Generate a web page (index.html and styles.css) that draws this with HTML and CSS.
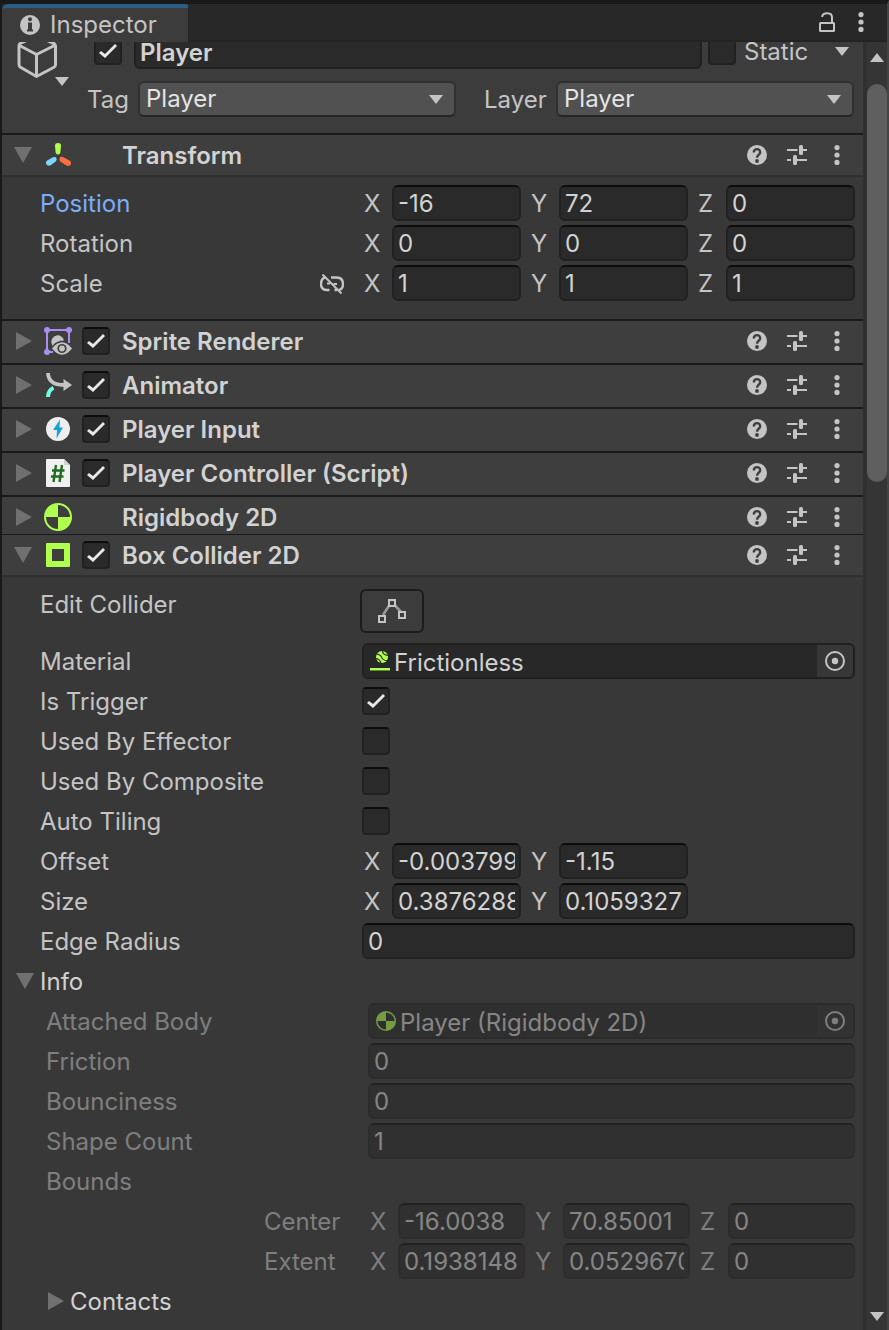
FILE: index.html
```html
<!DOCTYPE html>
<html lang="en">
<head>
<meta charset="utf-8">
<meta name="viewport" content="width=device-width, initial-scale=1">
<title>Inspector</title>
<link rel="stylesheet" href="styles.css">
</head>
<body>
<svg class="sprites" aria-hidden="true">
  <symbol id="i-help" viewBox="0 0 20 20"><circle cx="10" cy="10" r="10" fill="#c4c4c4"/><path d="M6.800 7.400C6.800 3 13.200 3.100 13.200 7.200C13.200 9.600 10 9.600 10 12.800" fill="none" stroke="#3e3e3e" stroke-width="2.400"/><circle cx="10" cy="16" r="1.900" fill="#3e3e3e"/></symbol>
  <symbol id="i-preset" viewBox="0 0 20 20"><path d="M0 5H10.500M16 5H20M0 15H4M10 15H20" stroke="#c4c4c4" stroke-width="2"/><rect x="12" y="0" width="4" height="10" rx="1.500" fill="#c4c4c4"/><rect x="6" y="10" width="4" height="10" rx="1.500" fill="#c4c4c4"/></symbol>
  <symbol id="i-dots" viewBox="0 0 20 20"><g fill="#c4c4c4"><circle cx="10" cy="2.600" r="2.600"/><circle cx="10" cy="10" r="2.600"/><circle cx="10" cy="17.400" r="2.600"/></g></symbol>
  <symbol id="i-open" viewBox="0 0 18 18"><path d="M0 1H18L9 17Z" fill="#707070"/></symbol>
  <symbol id="i-closed" viewBox="0 0 18 18"><path d="M2 0V18L18 9Z" fill="#707070"/></symbol>
  <symbol id="i-down" viewBox="0 0 14 9"><path d="M0 0H14L7 9Z" fill="#c4c4c4"/></symbol>
  <symbol id="i-pick" viewBox="0 0 20 20"><circle cx="10" cy="10" r="9" fill="none" stroke="#c4c4c4" stroke-width="2"/><circle cx="10" cy="10" r="3.200" fill="#c4c4c4"/></symbol>
  <symbol id="i-body" viewBox="0 0 28 28"><circle cx="14" cy="14" r="13" fill="none" stroke="#b0ff4f" stroke-width="2"/><path d="M14 14V1A13 13 0 0 0 1 14ZM14 14V27A13 13 0 0 0 27 14Z" fill="#b0ff4f"/></symbol>
</svg>

<div class="window">
  <header class="tabbar">
    <div class="tab">
      <svg class="icon20" viewBox="0 0 20 20" aria-hidden="true"><circle cx="10" cy="10" r="10" fill="#c4c4c4"/><circle cx="10" cy="4.200" r="2" fill="#3c3c3c"/><path d="M8 7.500H12V14.500H13V16.500H7V14.500H8Z" fill="#3c3c3c"/></svg>
      <span>Inspector</span>
    </div>
    <div class="tabbar-tools">
      <button class="tool" aria-label="Lock"><svg class="icon20" viewBox="0 0 20 20"><rect x="3" y="11" width="14" height="8" rx="0.500" fill="none" stroke="#c4c4c4" stroke-width="2"/><path d="M5 5C6 0 15 0 15 5.500V11" fill="none" stroke="#c4c4c4" stroke-width="2"/></svg></button>
      <button class="tool" aria-label="Window menu"><svg class="icon20"><use href="#i-dots"/></svg></button>
    </div>
  </header>

  <div class="view">
    <main class="content">
      <section class="object">
        <div class="object-icon">
          <svg class="cube" viewBox="0 0 54 54" aria-hidden="true"><path d="M20.500 1L38 8.500Q39.500 9.500 39.500 11V29.500Q39.500 31.500 38 32.300L20.500 41.500L4.500 32.300Q3 31.500 3 29.500V11Q3 9.500 4 8.500Z M3.500 10.500L20.500 19.500L38.500 10.500M20.500 19.500V41" fill="none" stroke="#c4c4c4" stroke-width="3" stroke-linejoin="round"/><path d="M39 42H53L46 51Z" fill="#c4c4c4"/></svg>
        </div>
        <div class="object-main">
          <div class="name-row">
            <input type="checkbox" class="check" aria-label="Active" checked>
            <input type="text" class="field name" aria-label="Name" value="Player">
            <div class="static">
              <input type="checkbox" class="check" id="static"><label for="static">Static</label>
              <button class="tool static-menu" aria-label="Static options"><svg class="caret"><use href="#i-down"/></svg></button>
            </div>
          </div>
          <div class="tag-row">
            <label for="tag">Tag</label>
            <div class="drop"><select id="tag"><option>Player</option></select><svg class="caret" aria-hidden="true"><use href="#i-down"/></svg></div>
            <label class="layer" for="layer">Layer</label>
            <div class="drop"><select id="layer"><option>Player</option></select><svg class="caret" aria-hidden="true"><use href="#i-down"/></svg></div>
          </div>
        </div>
      </section>

      <section class="component">
        <div class="head open">
          <button class="tool fold" aria-label="Collapse Transform"><svg><use href="#i-open"/></svg></button>
          <svg class="icon28" viewBox="0 0 28 28" aria-hidden="true"><path d="M14 2Q17.200 2 17 5L16.300 12Q14 15 11.700 12L11 5Q10.800 2 14 2Z" fill="#b0ff4f"/><path d="M12.500 17Q13.200 19.500 11.500 20.800L6.500 24.200Q3.500 25.500 2.200 23Q1.200 20.300 4 19L9 16.300Q11.500 15.300 12.500 17Z" fill="#7fd6fd"/><path d="M15.500 17Q16.500 15 19 16L25 19.200Q27.800 21 26.800 23.500Q25.300 25.800 22 24.300L16.500 20.800Q15 19 15.500 17Z" fill="#ff6e40"/></svg>
          <span class="slot"></span>
          <h2>Transform</h2>
          <div class="tools"><button class="tool" aria-label="Help"><svg class="icon20"><use href="#i-help"/></svg></button><button class="tool" aria-label="Presets"><svg class="icon20"><use href="#i-preset"/></svg></button><button class="tool" aria-label="More"><svg class="icon20"><use href="#i-dots"/></svg></button></div>
        </div>
        <div class="body transform-body">
          <div class="row" role="group" aria-label="Position">
            <span class="changed">Position</span>
            <div class="vector"><label><span>X</span><input class="field" value="-16"></label><label><span>Y</span><input class="field" value="72"></label><label><span>Z</span><input class="field" value="0"></label></div>
          </div>
          <div class="row" role="group" aria-label="Rotation">
            <span>Rotation</span>
            <div class="vector"><label><span>X</span><input class="field" value="0"></label><label><span>Y</span><input class="field" value="0"></label><label><span>Z</span><input class="field" value="0"></label></div>
          </div>
          <div class="row" role="group" aria-label="Scale">
            <span class="with-link">Scale<button class="tool" aria-label="Constrain proportions"><svg class="link" viewBox="0 0 24 20"><path d="M6 3.200Q1 4 1 10Q1 16 7 16H9.500M11 3.500H16Q23 3.500 23 10Q23 15 19 16M14.500 16H17" fill="none" stroke="#c4c4c4" stroke-width="2.400"/><path d="M7 9.500H10M13.500 10H17" stroke="#c4c4c4" stroke-width="2"/><path d="M2.500 0.500L21.500 19.500" stroke="#c4c4c4" stroke-width="2"/></svg></button></span>
            <div class="vector"><label><span>X</span><input class="field" value="1"></label><label><span>Y</span><input class="field" value="1"></label><label><span>Z</span><input class="field" value="1"></label></div>
          </div>
        </div>
      </section>

      <section class="component">
        <div class="head">
          <button class="tool fold" aria-label="Expand Sprite Renderer"><svg><use href="#i-closed"/></svg></button>
          <svg class="icon28" viewBox="0 0 28 28" aria-hidden="true"><g stroke="#a98ef0" stroke-width="2" fill="none"><path d="M3 25V3H25V16M3 25H9"/></g><g fill="#a98ef0"><circle cx="3" cy="3" r="3"/><circle cx="25" cy="3" r="3"/><circle cx="3" cy="25" r="3"/></g><path d="M7.500 16A6.300 6.300 0 1 1 20 13.500Q12 13.500 8.500 19Z" fill="#c4c4c4"/><path d="M8 21.500Q18 9 28 21.500Q18 34 8 21.500Z" fill="#c4c4c4"/><circle cx="18" cy="21.500" r="4.600" fill="#3e3e3e"/><circle cx="18" cy="21.500" r="2.900" fill="#c4c4c4"/></svg>
          <input type="checkbox" class="check" aria-label="Enable Sprite Renderer" checked>
          <h2>Sprite Renderer</h2>
          <div class="tools"><button class="tool" aria-label="Help"><svg class="icon20"><use href="#i-help"/></svg></button><button class="tool" aria-label="Presets"><svg class="icon20"><use href="#i-preset"/></svg></button><button class="tool" aria-label="More"><svg class="icon20"><use href="#i-dots"/></svg></button></div>
        </div>
      </section>

      <section class="component">
        <div class="head">
          <button class="tool fold" aria-label="Expand Animator"><svg><use href="#i-closed"/></svg></button>
          <svg class="icon28" viewBox="0 0 28 28" aria-hidden="true"><path d="M4 2Q4.500 14 20 14" fill="none" stroke="#c4c4c4" stroke-width="3.800"/><path d="M19.500 8L28 14L19.500 20Z" fill="#c4c4c4"/><path d="M4 26Q4 19.500 9.500 16.800" fill="none" stroke="#6fffe0" stroke-width="4"/></svg>
          <input type="checkbox" class="check" aria-label="Enable Animator" checked>
          <h2>Animator</h2>
          <div class="tools"><button class="tool" aria-label="Help"><svg class="icon20"><use href="#i-help"/></svg></button><button class="tool" aria-label="Presets"><svg class="icon20"><use href="#i-preset"/></svg></button><button class="tool" aria-label="More"><svg class="icon20"><use href="#i-dots"/></svg></button></div>
        </div>
      </section>

      <section class="component">
        <div class="head">
          <button class="tool fold" aria-label="Expand Player Input"><svg><use href="#i-closed"/></svg></button>
          <svg class="icon28" viewBox="0 0 28 28" aria-hidden="true"><circle cx="14" cy="14" r="12" fill="#eeeeee"/><path d="M16 4.500L9 15H13L12.500 23.500L19 12.500H15.500Z" fill="#17a2d4"/></svg>
          <input type="checkbox" class="check" aria-label="Enable Player Input" checked>
          <h2>Player Input</h2>
          <div class="tools"><button class="tool" aria-label="Help"><svg class="icon20"><use href="#i-help"/></svg></button><button class="tool" aria-label="Presets"><svg class="icon20"><use href="#i-preset"/></svg></button><button class="tool" aria-label="More"><svg class="icon20"><use href="#i-dots"/></svg></button></div>
        </div>
      </section>

      <section class="component">
        <div class="head">
          <button class="tool fold" aria-label="Expand Player Controller"><svg><use href="#i-closed"/></svg></button>
          <svg class="icon28" viewBox="0 0 28 28" aria-hidden="true"><path d="M3 0H20L26 6V27Q26 28 25 28H3Q2 28 2 27V1Q2 0 3 0Z" fill="#f0f0f0"/><path d="M20 0V6H26Z" fill="#d0d0d0"/><path d="M12 6L9.500 23M18 6L15.500 23M8 11.500H20.500M7 17.500H19.500" stroke="#226b22" stroke-width="2.400"/></svg>
          <input type="checkbox" class="check" aria-label="Enable Player Controller" checked>
          <h2>Player Controller (Script)</h2>
          <div class="tools"><button class="tool" aria-label="Help"><svg class="icon20"><use href="#i-help"/></svg></button><button class="tool" aria-label="Presets"><svg class="icon20"><use href="#i-preset"/></svg></button><button class="tool" aria-label="More"><svg class="icon20"><use href="#i-dots"/></svg></button></div>
        </div>
      </section>

      <section class="component">
        <div class="head tight">
          <button class="tool fold" aria-label="Expand Rigidbody 2D"><svg><use href="#i-closed"/></svg></button>
          <svg class="icon28" aria-hidden="true"><use href="#i-body"/></svg>
          <span class="slot"></span>
          <h2>Rigidbody 2D</h2>
          <div class="tools"><button class="tool" aria-label="Help"><svg class="icon20"><use href="#i-help"/></svg></button><button class="tool" aria-label="Presets"><svg class="icon20"><use href="#i-preset"/></svg></button><button class="tool" aria-label="More"><svg class="icon20"><use href="#i-dots"/></svg></button></div>
        </div>
      </section>

      <section class="component thin">
        <div class="head open">
          <button class="tool fold" aria-label="Collapse Box Collider 2D"><svg><use href="#i-open"/></svg></button>
          <svg class="icon28" viewBox="0 0 28 28" aria-hidden="true"><path fill-rule="evenodd" d="M3 2H25Q26 2 26 3V25Q26 26 25 26H3Q2 26 2 25V3Q2 2 3 2ZM8 8V20H20V8Z" fill="#b0ff4f"/></svg>
          <input type="checkbox" class="check" aria-label="Enable Box Collider 2D" checked>
          <h2>Box Collider 2D</h2>
          <div class="tools"><button class="tool" aria-label="Help"><svg class="icon20"><use href="#i-help"/></svg></button><button class="tool" aria-label="Presets"><svg class="icon20"><use href="#i-preset"/></svg></button><button class="tool" aria-label="More"><svg class="icon20"><use href="#i-dots"/></svg></button></div>
        </div>
        <div class="body collider-body">
          <div class="row edit-row">
            <span>Edit Collider</span>
            <button class="edit" aria-label="Edit Collider"><svg viewBox="0 0 28 24" aria-hidden="true"><path d="M5 16L11.500 6M16.500 6L23 13" stroke="#9a9a9a" stroke-width="2.600"/><g fill="#3c3c3c" stroke="#c4c4c4" stroke-width="2"><rect x="1" y="17" width="6" height="6"/><rect x="11" y="1" width="6" height="6"/><rect x="21" y="13" width="6" height="6"/></g></svg></button>
          </div>
          <div class="row">
            <span>Material</span>
            <div class="objfield">
              <svg class="icon20" viewBox="0 0 20 20" aria-hidden="true"><path d="M0 18H20" stroke="#b0ff4f" stroke-width="2"/><path d="M0 19.500H20" stroke="#5c8a28" stroke-width="1"/><circle cx="12" cy="6" r="6" fill="#b0ff4f"/><path d="M5.500 2.500Q11 4 11.500 6Q12 9 17.500 10M12.500 0Q12.500 4 18.500 4.500M5.500 7.500Q10.500 8 11 12.500" fill="none" stroke="#282828" stroke-width="1.200"/></svg>
              <span class="objname">Frictionless</span>
              <button class="pick" aria-label="Select Material"><svg class="icon20"><use href="#i-pick"/></svg></button>
            </div>
          </div>
          <div class="row"><label for="trigger">Is Trigger</label><input type="checkbox" class="check" id="trigger" checked></div>
          <div class="row"><label for="effector">Used By Effector</label><input type="checkbox" class="check" id="effector"></div>
          <div class="row"><label for="composite">Used By Composite</label><input type="checkbox" class="check" id="composite"></div>
          <div class="row"><label for="tiling">Auto Tiling</label><input type="checkbox" class="check" id="tiling"></div>
          <div class="row" role="group" aria-label="Offset">
            <span>Offset</span>
            <div class="vector"><label><span>X</span><input class="field" value="-0.0037994"></label><label><span>Y</span><input class="field" value="-1.15"></label></div>
          </div>
          <div class="row" role="group" aria-label="Size">
            <span>Size</span>
            <div class="vector"><label><span>X</span><input class="field" value="0.3876288"></label><label><span>Y</span><input class="field" value="0.1059327"></label></div>
          </div>
          <div class="row"><label for="radius">Edge Radius</label><input class="field" id="radius" value="0"></div>
          <button class="tool foldrow"><svg class="foldmark" aria-hidden="true"><use href="#i-open"/></svg><span>Info</span></button>
          <div class="info">
            <div class="row">
              <span>Attached Body</span>
              <div class="objfield">
                <svg class="icon20" aria-hidden="true"><use href="#i-body"/></svg>
                <span class="objname">Player (Rigidbody 2D)</span>
                <button class="pick" aria-label="Select Attached Body" disabled><svg class="icon20"><use href="#i-pick"/></svg></button>
              </div>
            </div>
            <div class="row"><label for="friction">Friction</label><input class="field" id="friction" value="0" disabled></div>
            <div class="row"><label for="bounce">Bounciness</label><input class="field" id="bounce" value="0" disabled></div>
            <div class="row"><label for="shapes">Shape Count</label><input class="field" id="shapes" value="1" disabled></div>
            <div class="row"><span>Bounds</span></div>
            <div class="row" role="group" aria-label="Center">
              <span class="sub">Center</span>
              <div class="vector"><label><span>X</span><input class="field" value="-16.0038" disabled></label><label><span>Y</span><input class="field" value="70.85001" disabled></label><label><span>Z</span><input class="field" value="0" disabled></label></div>
            </div>
            <div class="row" role="group" aria-label="Extent">
              <span class="sub">Extent</span>
              <div class="vector"><label><span>X</span><input class="field" value="0.1938148" disabled></label><label><span>Y</span><input class="field" value="0.0529670" disabled></label><label><span>Z</span><input class="field" value="0" disabled></label></div>
            </div>
          </div>
          <button class="tool foldrow nested"><svg class="foldmark" aria-hidden="true"><use href="#i-closed"/></svg><span>Contacts</span></button>
        </div>
      </section>
    </main>

    <div class="scrollbar">
      <button class="tool" aria-label="Scroll up"><svg class="caret up"><use href="#i-down"/></svg></button>
      <div class="track"><div class="thumb"></div></div>
      <button class="tool" aria-label="Scroll down"><svg class="caret"><use href="#i-down"/></svg></button>
    </div>
  </div>
</div>
</body>
</html>
```

FILE: styles.css
```css
* {
  box-sizing: border-box;
}

body {
  margin: 0;
  background: #383838;
  color: #c4c4c4;
  font: 24px/28px Inter, "Liberation Sans", sans-serif;
}

button,
input,
select {
  margin: 0;
  font: inherit;
  color: inherit;
}

svg {
  display: block;
  flex: none;
}

.sprites {
  display: none;
}

.window {
  display: flex;
  flex-direction: column;
  height: 100vh;
  overflow: hidden;
  border: solid #191919;
  border-width: 4px 0 0 2px;
  border-right: 2px solid #444444;
}

/* Tab bar */

.tabbar {
  display: flex;
  justify-content: space-between;
  flex: none;
  height: 38px;
  background: #282828;
  box-shadow: inset 0 -2px #232323;
}

.tab {
  display: flex;
  align-items: center;
  gap: 10px;
  width: 187px;
  padding-left: 18px;
  border-top: 4px solid #2c5d87;
  border-right: 1px solid #232323;
  border-radius: 6px 4px 0 0;
  background: #3c3c3c;
}

.tabbar-tools {
  display: flex;
  align-items: flex-start;
  gap: 14px;
  padding: 8px 16px 0 0;
}

.tool {
  display: block;
  flex: none;
  padding: 0;
  border: 0;
  background: none;
}

.icon20 {
  width: 20px;
  height: 20px;
}

.icon28 {
  width: 28px;
  height: 28px;
}

.caret {
  width: 14px;
  height: 9px;
}

.up {
  transform: rotate(180deg);
}

/* Scroll view */

.view {
  display: flex;
  flex: 1;
  min-height: 0;
}

.content {
  flex: 1;
  min-width: 0;
  overflow: hidden;
}

.scrollbar {
  display: flex;
  flex-direction: column;
  align-items: center;
  flex: none;
  width: 24px;
  padding: 11px 0 9px;
  border-left: 4px solid #303030;
  background: #353535;
}

.track {
  flex: 1;
  width: 100%;
  padding: 22px 0;
}

.thumb {
  height: 33%;
  border-radius: 10px;
  background: #5f5f5f;
}

/* Fields */

.field {
  width: 100%;
  min-width: 0;
  height: 36px;
  padding: 0 4px;
  border: 2px solid #212121;
  border-top-color: #0d0d0d;
  border-radius: 6px;
  background: #2a2a2a;
  color: #d2d2d2;
}

.check {
  appearance: none;
  flex: none;
  width: 28px;
  height: 28px;
  border: 2px solid #212121;
  border-top-color: #0d0d0d;
  border-radius: 4px;
  background: #2a2a2a;
}

.check:checked::before {
  content: "";
  display: block;
  height: 100%;
  background: #e8e8e8;
  clip-path: polygon(3px 14px, 5px 12px, 9px 15px, 19px 5px, 21px 7px, 9px 19px);
}

.drop {
  display: grid;
  align-items: center;
}

.drop > * {
  grid-area: 1 / 1;
}

.drop select {
  appearance: none;
  width: 100%;
  height: 36px;
  padding: 0 6px;
  border: 2px solid #303030;
  border-bottom-color: #242424;
  border-radius: 6px;
  background: #515151;
  color: #e4e4e4;
}

.drop .caret {
  justify-self: end;
  margin-right: 13px;
  pointer-events: none;
}

.objfield {
  display: flex;
  align-items: center;
  height: 36px;
  padding-left: 6px;
  overflow: hidden;
  border: 2px solid #202020;
  border-radius: 6px;
  background: #282828;
}

.objname {
  flex: 1;
  padding: 4px 0 0 4px;
  color: #d2d2d2;
}

.pick {
  display: grid;
  place-items: center;
  width: 36px;
  height: 32px;
  padding: 0;
  border: 0;
  background: #373737;
}

.pick:disabled {
  background: #2e2e2e;
}

/* Object header, scrolled partly out of view */

.object {
  display: flex;
  margin-top: -14px;
  padding: 5px 9px 16px 14px;
  background: #3c3c3c;
}

.object-icon {
  width: 71px;
  padding-top: 2px;
}

.cube {
  width: 54px;
  height: 54px;
}

.object-main {
  flex: 1;
  min-width: 0;
}

.name-row {
  display: flex;
  align-items: center;
  padding-left: 7px;
}

.name {
  flex: 1;
  margin: 0 6px 0 12px;
  padding-top: 2px;
  font-weight: 600;
}

.static {
  display: flex;
  align-items: center;
  gap: 8px;
  width: 146px;
}

.static-menu {
  margin: 0 5px 0 auto;
}

.tag-row {
  display: grid;
  grid-template-columns: 51px 318fr 100px 298fr;
  align-items: center;
  margin-top: 12px;
}

.static label,
.tag-row label {
  padding-top: 2px;
}

.tag-row .layer {
  padding-left: 28px;
}

/* Components */

.component {
  border-top: 2px solid #1a1a1a;
}

.thin {
  border-top-width: 1px;
}

.head {
  display: flex;
  align-items: center;
  height: 42px;
  padding: 0 16px 2px 12px;
  background: #3e3e3e;
}

.head.open {
  border-bottom: 2px solid #303030;
  padding-bottom: 0;
}

.head.tight {
  height: 37px;
  padding-bottom: 0;
}

.head.tight > * {
  margin-top: 3px;
}

.fold svg,
.foldmark {
  width: 18px;
  height: 18px;
}

.head .icon28 {
  margin-left: 12px;
  margin-right: 10px;
}

.slot {
  width: 28px;
}

h2 {
  flex: 1;
  margin: 0 0 0 12px;
  padding-top: 2px;
  font-size: 24px;
  font-weight: 600;
  color: #d2d2d2;
}

.tools {
  display: flex;
  gap: 20px;
}

.body {
  display: flex;
  flex-direction: column;
  gap: 4px;
  padding-right: 8px;
  padding-left: 38px;
}

.transform-body {
  padding-top: 8px;
  padding-bottom: 18px;
}

.collider-body {
  padding-top: 12px;
}

.row {
  display: grid;
  grid-template-columns: 322px minmax(0, 1fr);
  align-items: center;
  min-height: 36px;
}

.row > span,
.row > label,
.vector span,
.foldrow span {
  padding-top: 2px;
}

.changed {
  color: #7baefa;
}

.with-link {
  display: flex;
  align-items: center;
  justify-content: space-between;
  padding-right: 18px;
}

.link {
  width: 24px;
  height: 20px;
}

.vector {
  display: grid;
  grid-template-columns: repeat(3, minmax(0, 1fr));
  gap: 8px;
}

.vector label {
  display: grid;
  grid-template-columns: 28px minmax(0, 1fr);
  align-items: center;
  padding-left: 2px;
}

.edit-row {
  align-items: start;
  margin-bottom: 6px;
}

.edit {
  display: grid;
  place-items: center;
  width: 64px;
  height: 44px;
  margin-left: -2px;
  padding: 0;
  border: 2px solid #1c1c1c;
  border-radius: 6px;
  background: #3c3c3c;
}

.edit svg {
  width: 28px;
  height: 24px;
}

.foldrow {
  display: flex;
  align-items: center;
  gap: 6px;
  height: 36px;
  margin-left: -24px;
  color: #d2d2d2;
}

.foldrow.nested {
  margin-left: 6px;
}

.info {
  display: flex;
  flex-direction: column;
  gap: 4px;
  padding-left: 6px;
  opacity: 0.5;
}

.row > .sub {
  padding-left: 218px;
}
```
